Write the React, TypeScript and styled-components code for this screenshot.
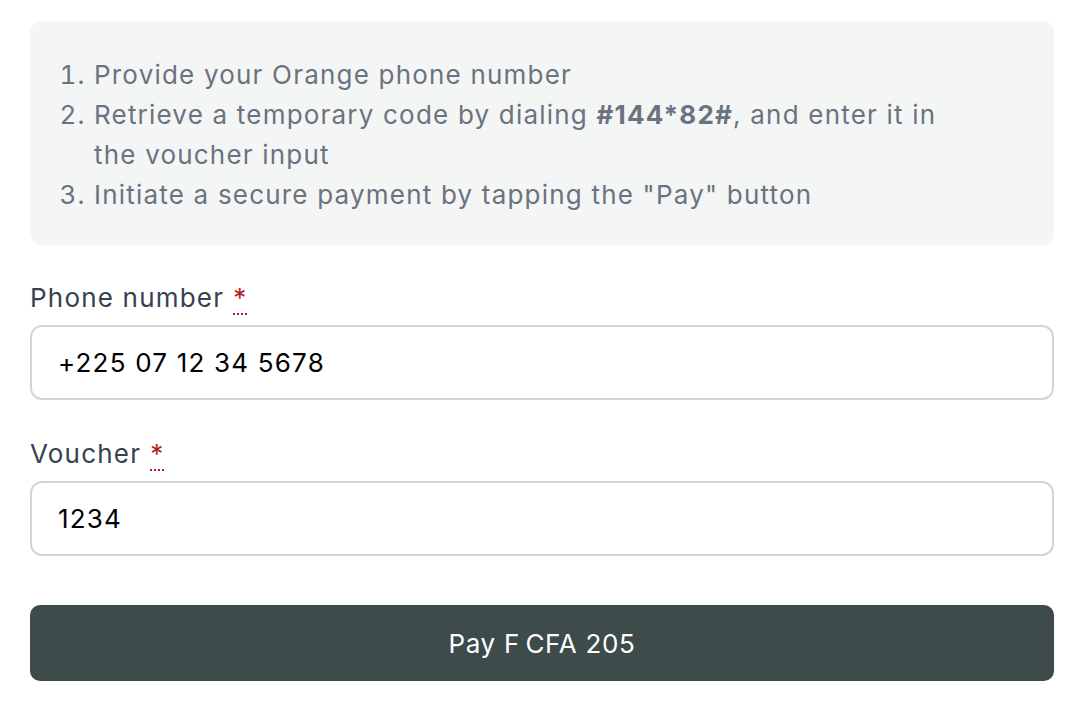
import React from "react";
import styled, { createGlobalStyle } from "styled-components";

const Global = createGlobalStyle`
  html, body { margin: 0; padding: 0; background: #ffffff; }
  body {
    font-family: Inter, "Noto Sans", sans-serif;
    font-feature-settings: "calt" 0;
    letter-spacing: 1.2px;
    -webkit-font-smoothing: antialiased;
  }
`;

const Page = styled.div`
  padding: 21px 38px 0 30px;
  display: flex;
  flex-direction: column;
`;

const Instructions = styled.div`
  background: #f4f6f5;
  border-radius: 12px;
  padding: 34px 94px 30px 32px;
`;

const Steps = styled.ol`
  margin: 0;
  padding-left: 32px;
  color: #6b7280;
  font-size: 26px;
  line-height: 40px;
`;

const Step = styled.li`
  padding-left: 0;
`;

const Code = styled.strong`
  font-weight: 700;
  color: #6b7280;
`;

const Field = styled.div<{ $top: number }>`
  display: flex;
  flex-direction: column;
  margin-top: ${(p) => p.$top}px;
`;

const Label = styled.label`
  font-size: 26px;
  line-height: 36px;
  color: #374151;
  margin-bottom: 9px;
`;

const Req = styled.abbr`
  color: #b91c1c;
  margin-left: 9px;
  text-decoration: underline dotted;
  text-decoration-thickness: 2px;
  text-underline-offset: 6px;
  cursor: help;
`;

const Input = styled.input`
  box-sizing: border-box;
  height: 75px;
  width: 100%;
  border: 2px solid #d1d5db;
  border-radius: 12px;
  padding: 0 26px;
  font-family: Inter, "Noto Sans", sans-serif;
  font-feature-settings: "calt" 0;
  letter-spacing: 1.2px;
  font-size: 26px;
  color: #000000;
  background: #ffffff;
  outline: none;
`;

const PayButton = styled.button`
  margin-top: 49px;
  height: 76px;
  border: none;
  border-radius: 10px;
  background: #3d4b4b;
  color: #ffffff;
  font-family: Inter, "Noto Sans", sans-serif;
  letter-spacing: 0.7px;
  font-size: 26px;
  cursor: pointer;
`;

export default function App() {
  return (
    <>
      <Global />
      <Page>
        <Instructions>
          <Steps>
            <Step>Provide your Orange phone number</Step>
            <Step>
              Retrieve a temporary code by dialing <Code>#144*82#</Code>, and enter it in the voucher input
            </Step>
            <Step>Initiate a secure payment by tapping the "Pay" button</Step>
          </Steps>
        </Instructions>
        <Field $top={35}>
          <Label>
            Phone number<Req title="required">*</Req>
          </Label>
          <Input defaultValue="+225 07 12 34 5678" />
        </Field>
        <Field $top={36}>
          <Label>
            Voucher<Req title="required">*</Req>
          </Label>
          <Input defaultValue="1234" />
        </Field>
        <PayButton>Pay F{"\u202F"}CFA 205</PayButton>
      </Page>
    </>
  );
}
